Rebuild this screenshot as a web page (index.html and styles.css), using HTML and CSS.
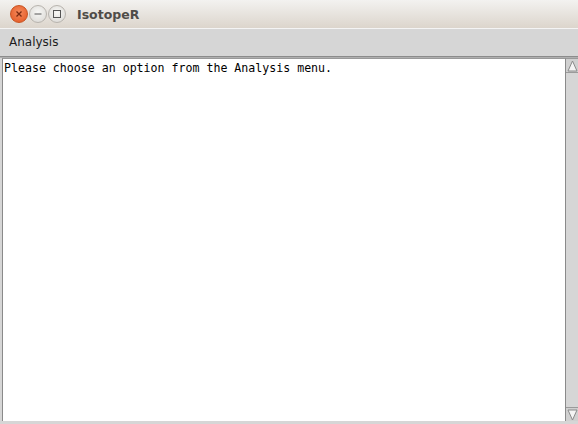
FILE: index.html
```html
<!DOCTYPE html>
<html>
<head>
<meta charset="utf-8">
<link rel="stylesheet" href="styles.css">
</head>
<body>
<div class="window">
  <div class="titlebar">
    <div class="buttons">
      <span class="btn close"><svg width="8" height="8" viewBox="0 0 8 8"><path d="M1.5 1.5L6.5 6.5M6.5 1.5L1.5 6.5" stroke="#7a2a10" stroke-width="1.3"/></svg></span>
      <span class="btn"><svg width="8" height="8" viewBox="0 0 8 8"><path d="M0.5 4H7.5" stroke="#555" stroke-width="1"/></svg></span>
      <span class="btn"><svg width="8" height="8" viewBox="0 0 8 8"><rect x="0.5" y="0.5" width="7" height="7" fill="none" stroke="#555" stroke-width="1"/></svg></span>
    </div>
    <div class="title">IsotopeR</div>
  </div>
  <div class="menubar"><span class="menu-item">Analysis</span></div>
  <div class="main">
    <div class="textarea">Please choose an option from the Analysis menu.</div>
    <div class="scrollbar">
      <div class="arrow up"><svg width="11" height="12" viewBox="0 0 11 12"><path d="M5.5 1L10 11H1Z" fill="#f4f4f4" stroke="#8a8a8a" stroke-width="1"/></svg></div>
      <div class="track"></div>
      <div class="arrow down"><svg width="11" height="12" viewBox="0 0 11 12"><path d="M1 1H10L5.5 11Z" fill="#f4f4f4" stroke="#8a8a8a" stroke-width="1"/></svg></div>
    </div>
  </div>
  <div class="bottom"></div>
</div>
</body>
</html>
```
FILE: styles.css
```css
html, body { margin: 0; padding: 0; }
body { width: 578px; height: 424px; overflow: hidden; background: #d6d6d6; }
.window { width: 578px; height: 424px; display: flex; flex-direction: column; }
.titlebar {
  height: 28px; flex: none; display: flex; align-items: center;
  background: linear-gradient(#f3f2f0, #dcd5cc);
  box-sizing: border-box;
}
.buttons { display: flex; gap: 1px; padding-left: 10px; margin-top: -1px; }
.btn {
  width: 18px; height: 18px; border-radius: 50%;
  background: radial-gradient(circle at 50% 40%, #f8f8f6, #d8d6d2);
  border: 0.5px solid #b8b4ae; box-sizing: border-box;
  display: flex; align-items: center; justify-content: center;
}
.btn.close { background: radial-gradient(circle at 50% 40%, #f58a5c, #e25520); border-color: #c8521f; }
.title {
  margin-left: 11px; font-family: "DejaVu Sans", sans-serif; font-weight: bold;
  font-size: 12.5px; color: #4f4c48; margin-top: 0;
}
.menubar {
  height: 28px; flex: none; border-top: 1px solid #f4f4f4; box-sizing: border-box;
  background: #d6d6d6; display: flex; align-items: center;
}
.menu-item { margin-left: 9px; font-family: "DejaVu Sans", sans-serif; font-size: 12px; color: #1c1c1c; margin-top: -1px; }
.main {
  flex: 1; display: flex; border-top: 1px solid #8c8c8c; box-shadow: inset 0 1px 0 #b0b0b0;
  padding-left: 2px; padding-top: 1px; min-height: 0;
}
.textarea {
  flex: 1; background: #fff; border-left: 1px solid #8a8a8a; border-top: 1px solid #9a9a9a;
  font-family: "DejaVu Sans Mono", monospace; font-size: 11.6px; color: #000;
  padding: 2px 0 0 1px; white-space: pre; line-height: 14px;
}
.scrollbar {
  width: 12px; flex: none; background: #d6d6d6; border-left: 1px solid #8a8a8a;
  display: flex; flex-direction: column; border-top: 1px solid #9a9a9a;
}
.arrow { height: 13px; flex: none; display: flex; align-items: center; justify-content: center; background: #d0d0d0; }
.arrow.up { border-bottom: 1px solid #9a9a9a; }
.arrow.down { border-top: 1px solid #9a9a9a; }
.track { flex: 1; background: #d6d6d6; }
.bottom { height: 3px; flex: none; background: #d6d6d6; }
```
